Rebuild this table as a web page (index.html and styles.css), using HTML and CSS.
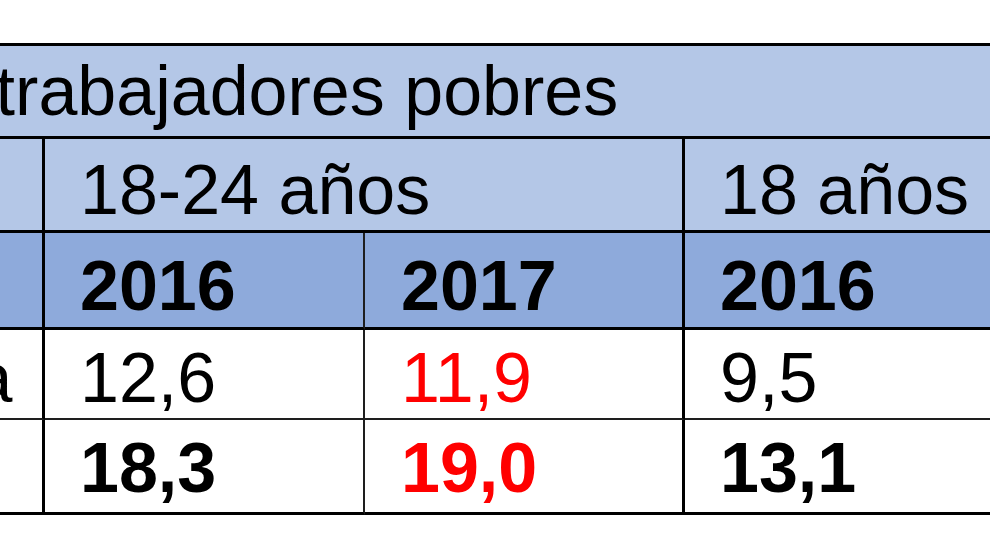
FILE: index.html
```html
<!DOCTYPE html>
<html lang="es">

<head>
    <meta charset="UTF-8">
    <meta name="viewport" content="width=device-width, initial-scale=1.0">
    <title>Trabajadores pobres</title>
    <link rel="stylesheet" href="styles.css">
</head>

<body>
    <div class="table_wrap">
        <table class="poverty">
            <colgroup>
                <col class="c_label">
                <col class="c_val">
                <col class="c_val">
                <col class="c_val">
                <col class="c_val">
            </colgroup>
            <tr class="title">
                <td colspan="5">Tasa de trabajadores pobres</td>
            </tr>
            <tr class="head">
                <td class="label"></td>
                <td colspan="2">18-24 años</td>
                <td colspan="2">18 años o más</td>
            </tr>
            <tr class="years">
                <td class="label"></td>
                <td class="thin">2016</td>
                <td class="mid">2017</td>
                <td>2016</td>
                <td>2017</td>
            </tr>
            <tr class="row_es">
                <td class="label">España</td>
                <td class="thin">12,6</td>
                <td class="mid red">11,9</td>
                <td>9,5</td>
                <td></td>
            </tr>
            <tr class="row_eu">
                <td class="label">UE-28</td>
                <td class="thin">18,3</td>
                <td class="mid red">19,0</td>
                <td>13,1</td>
                <td></td>
            </tr>
        </table><!-- .poverty end -->
    </div><!-- .table_wrap end -->
</body>

</html>
```

FILE: styles.css
```css
* {
    margin: 0;
    padding: 0;
    box-sizing: border-box;
}

body {
    background-color: #fff;
    font-family: "Liberation Sans", Arial, sans-serif;
}

/* the shot is cropped: first column and the right side fall outside */
.table_wrap {
    width: 990px;
    height: 557px;
    overflow: hidden;
    padding-top: 43px;
}

.poverty {
    border-collapse: separate;
    border-spacing: 0;
    table-layout: fixed;
    width: 1631px;
    margin-left: -306px;
    font-size: 70px;
    line-height: 70px;
    color: #000;
}

.poverty .c_label {
    width: 351px;
}

.poverty .c_val {
    width: 320px;
}

.poverty td {
    border-right: 3px solid #000;
    border-bottom: 3px solid #000;
    padding-left: 35px;
    vertical-align: top;
    white-space: nowrap;
    overflow: hidden;
}

.poverty td.label {
    padding-left: 81px;
}

.poverty td.thin {
    border-right: 2px solid #1e1e1e;
}

.poverty td.mid {
    padding-left: 36px;
}

.poverty .title {
    height: 96px;
}

.poverty .title td {
    border-top: 3px solid #000;
    background-color: #b4c7e7;
    padding-top: 10px;
    padding-left: 37px;
}

.poverty .head {
    height: 94px;
}

.poverty .head td {
    background-color: #b4c7e7;
    padding-top: 16px;
}

.poverty .years {
    height: 97px;
}

.poverty .years td {
    background-color: #8eaadb;
    font-weight: bold;
    padding-top: 18px;
}

.poverty .row_es {
    height: 90px;
}

.poverty .row_es td {
    border-bottom: 2px solid #1e1e1e;
    padding-top: 13px;
}

.poverty .row_eu {
    height: 95px;
}

.poverty .row_eu td {
    font-weight: bold;
    padding-top: 13px;
}

.poverty td.red {
    color: #f00;
}
```
